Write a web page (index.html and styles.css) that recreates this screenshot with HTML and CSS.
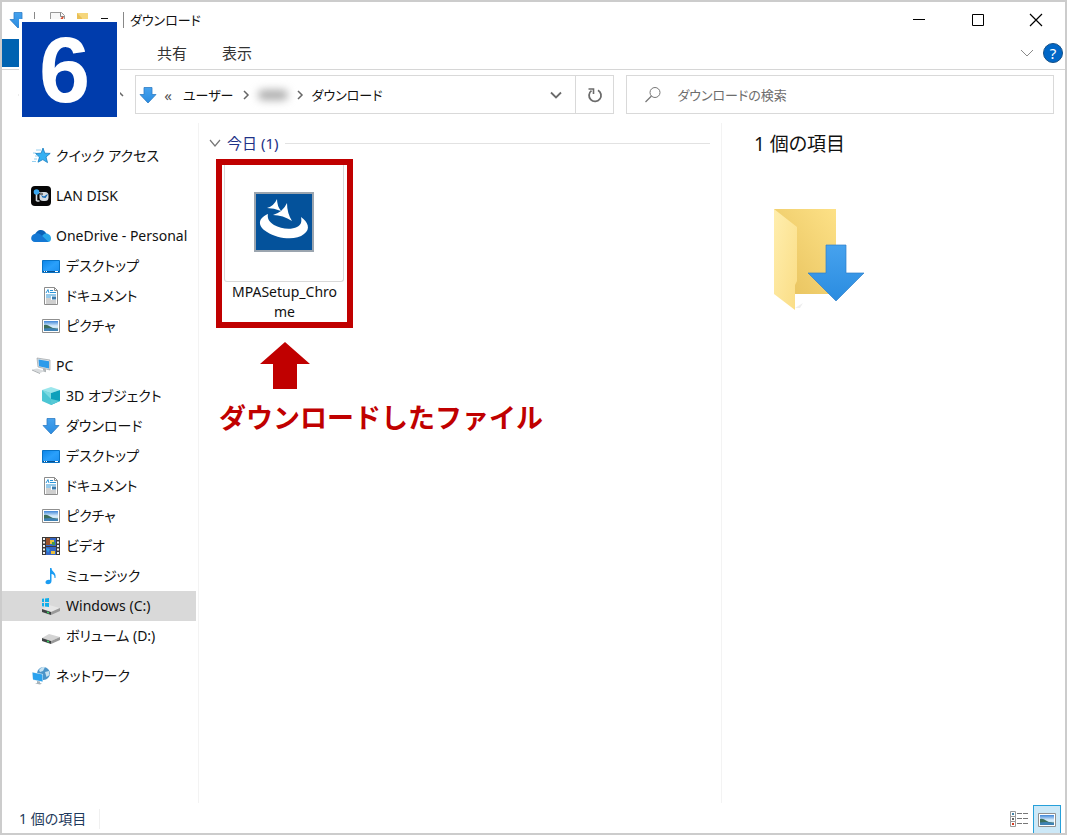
FILE: index.html
```html
<!DOCTYPE html>
<html lang="ja">
<head>
<meta charset="utf-8">
<title>ダウンロード</title>
<link rel="stylesheet" href="styles.css">
</head>
<body>
<svg class="defs" aria-hidden="true">
  <defs>
    <linearGradient id="g-blue" x1="0" y1="0" x2="1" y2="1"><stop offset="0" stop-color="#0a84e8"/><stop offset=".5" stop-color="#2aa0fb"/><stop offset="1" stop-color="#1a8ff0"/></linearGradient>
    <linearGradient id="g-arrow" x1="0" y1="0" x2="0" y2="1"><stop offset="0" stop-color="#46a2ee"/><stop offset="1" stop-color="#2a8ce0"/></linearGradient>
    <linearGradient id="g-back" x1="0" y1="1" x2="1" y2="0"><stop offset="0" stop-color="#e6c05a"/><stop offset="1" stop-color="#fde187"/></linearGradient>
    <linearGradient id="g-front" x1="0" y1="0" x2="1" y2="1"><stop offset="0" stop-color="#ffeeae"/><stop offset="1" stop-color="#fadd85"/></linearGradient>
    <linearGradient id="g-sky" x1="0" y1="0" x2="0" y2="1"><stop offset="0" stop-color="#3f86d8"/><stop offset=".5" stop-color="#d8ecfa"/><stop offset="1" stop-color="#b5d8ee"/></linearGradient>
    <symbol id="i-down" viewBox="0 0 18 18"><path d="M5 1.500h8v7h4L9 17 1 8.500h4z" fill="url(#g-arrow)" stroke="#2f7cc4" stroke-width=".8"/></symbol>
    <symbol id="i-desktop" viewBox="0 0 18 18"><path d="M.5 3.500h17v12H.5z" fill="url(#g-blue)" stroke="#0873c6"/><path d="M1 14.500h16" stroke="#08508f"/><path d="M2 14.500h1m1 0h1m8 0h3" stroke="#fff"/></symbol>
    <symbol id="i-doc" viewBox="0 0 18 18"><path d="M2.500.5h10l3 3v14h-13z" fill="#fff" stroke="#8c8c8c"/><path d="M12.500.5v3h3" fill="none" stroke="#8c8c8c"/><path d="M4 6l2-3.500 1 3.500M8 3.500h3M8 5.500h6M4 8h10M4 10h5" fill="none" stroke="#2d94d6"/><path d="M4 12h5M4 14h10M4 16h10" stroke="#a0a0a0"/><path d="M10 9.500h4v3h-4z" fill="#3c7cae"/></symbol>
    <symbol id="i-pic" viewBox="0 0 18 18"><path d="M.5 2.500h17v13H.5z" fill="#fff" stroke="#8f8f8f"/><path d="M2 4h14v10H2z" fill="url(#g-sky)"/><path d="M2 8q3-1 6 1.500t8 2V12H2z" fill="#3c6e5b"/><path d="M2 11.500l6-.5 8 1v2H2z" fill="#3f82b4"/></symbol>
    <symbol id="i-chev" viewBox="0 0 10 10"><path d="M3 1l4 4-4 4" fill="none" stroke="currentColor" stroke-width="1.500"/></symbol>
    <symbol id="i-disk" viewBox="0 0 18 18"><path d="M0 11l7-4 11 3-9 4z" fill="#d4d4d4"/><path d="M0 11l9 3v3l-9-3z" fill="#3f4244"/><path d="M9 14l9-4v3l-9 4z" fill="#999"/><path d="M5 13.500l2 .5v1.500L5 15z" fill="#39d060"/></symbol>
  </defs>
</svg>

<div class="window">
  <header class="titlebar">
    <div class="quick">
      <svg class="icon18"><use href="#i-down"/></svg>
      <span class="sep"></span>
      <svg class="icon18" viewBox="0 0 18 18"><path d="M2.500 1.500h11l3 3v12h-14z" fill="#f8f8f8" stroke="#999"/><path d="M12.500 1.500v4h4" fill="none" stroke="#888"/><path d="M8 10l2 3 5-7" fill="none" stroke="#dc5030" stroke-width="2"/></svg>
      <svg class="icon18" viewBox="0 0 18 18"><path d="M4 2h11v14H4z" fill="#f5d67c"/><path d="M4 2l5 5v10l-5-2z" fill="#e9bf55"/></svg>
      <svg class="icon18" viewBox="0 0 18 18"><path d="M3 7.500h7" stroke="#111"/><path d="M3 11h7l-3.500 4z" fill="#111"/></svg>
      <span class="sep"></span>
    </div>
    <h1 class="title">ダウンロード</h1>
    <div class="controls">
      <button type="button" aria-label="最小化"><svg viewBox="0 0 14 14"><path d="M1 6.500h12" stroke="#000"/></svg></button>
      <button type="button" aria-label="最大化"><svg viewBox="0 0 14 14"><path d="M1.500 1.500h11v11h-11z" fill="none" stroke="#000"/></svg></button>
      <button type="button" aria-label="閉じる"><svg viewBox="0 0 14 14"><path d="M1 1l12 12M13 1L1 13" stroke="#000" stroke-width="1.200"/></svg></button>
    </div>
  </header>

  <div class="ribbon">
    <button type="button" class="tab tab-file" aria-label="ファイル"></button>
    <button type="button" class="tab tab-home" aria-label="ホーム"></button>
    <button type="button" class="tab tab-share">共有</button>
    <button type="button" class="tab tab-view">表示</button>
    <button type="button" class="expand" aria-label="リボンの展開"><svg viewBox="0 0 14 14"><path d="M1 4l6 6 6-6" fill="none" stroke="#8a8a8a"/></svg></button>
    <button type="button" class="help" aria-label="ヘルプ">?</button>
  </div>

  <div class="toolbar">
    <div class="history">
      <button type="button" aria-label="戻る"><svg viewBox="0 0 14 14"><path d="M13 7H8M11 4L8 7l3 3" fill="none" stroke="#ddd" stroke-width="1.500"/></svg></button>
      <button type="button" aria-label="上へ"><svg viewBox="0 0 14 14"><path d="M7 13V2M1 8l6-6 6 6" fill="none" stroke="#666" stroke-width="1.500"/></svg></button>
    </div>
    <div class="address">
      <nav class="crumbs" aria-label="場所">
        <svg class="icon18"><use href="#i-down"/></svg>
        <span class="more">«</span>
        <a href="#users">ユーザー</a>
        <svg class="chev"><use href="#i-chev"/></svg>
        <a href="#user" aria-label="ユーザー名"><span class="smudge"></span></a>
        <svg class="chev"><use href="#i-chev"/></svg>
        <a href="#downloads">ダウンロード</a>
      </nav>
      <button type="button" class="drop" aria-label="以前の場所"><svg viewBox="0 0 14 14"><path d="M2 4.500l5 5 5-5" fill="none" stroke="#6b6b6b" stroke-width="1.800"/></svg></button>
      <button type="button" class="refresh" aria-label="最新の情報に更新"><svg viewBox="0 0 16 16"><path d="M11 3.200a6 6 0 1 1-6.500.4" fill="none" stroke="#6b6b6b" stroke-width="1.800"/><path d="M1.500 2h5v5" fill="none" stroke="#6b6b6b" stroke-width="1.600"/></svg></button>
    </div>
    <label class="search">
      <svg viewBox="0 0 18 18"><circle cx="11" cy="6.500" r="5" fill="none" stroke="#777"/><path d="M7.500 10L1.500 16" stroke="#777" stroke-width="1.200"/></svg>
      <input type="search" placeholder="ダウンロードの検索" aria-label="ダウンロードの検索">
    </label>
  </div>

  <main class="body">
    <nav class="tree" aria-label="ナビゲーション">
      <ul>
        <li><a href="#quick"><svg viewBox="0 0 20 20"><path d="M12 2l1.800 5.200 5.400.2-4.200 3.600 1.500 5.600-4.700-3-4.800 2.600L8.500 11 4.500 7.500l5.600-.3z" fill="#35b0f2" stroke="#147cc0" stroke-width=".8"/><path d="M5 4h5M2 7h3M4 10h3M3 13h3M1 15.500h4" stroke="#7cc4ec" stroke-width=".8"/></svg>クイック アクセス</a></li>
      </ul>
      <ul>
        <li><a href="#lan"><svg viewBox="0 0 20 20"><rect width="20" height="20" rx="4" fill="#060606"/><path d="M5.500 6v9" stroke="#d5dbe0" stroke-width="1.600"/><path d="M5.500 6l7 1.500" stroke="#d5dbe0"/><circle cx="5.500" cy="6" r="2.800" fill="#39a7f0"/><path d="M5.500 15h3" stroke="#d5dbe0" stroke-width="1.500"/><rect x="8.500" y="6" width="9" height="9" rx="3.500" fill="#d5dbe0"/><path d="M10 9l3 1.500 3.500-2.500v1l-2 3-3-.5z" fill="#1168b4"/><path d="M9 8h3" stroke="#111"/></svg>LAN DISK</a></li>
      </ul>
      <ul>
        <li><a href="#onedrive"><svg viewBox="0 0 20 20"><path d="M4 9.500C5 3 13 2 15.500 8L10 12z" fill="#0962b8"/><path d="M13 8c4-1.500 7 1.500 7 4.500 0 2-1 3.500-3 3.500H6l5-6z" fill="#28a8ea"/><path d="M5 7.500c3-1 5 1 12.500 8.500H4C-1 16-1.500 8.500 5 7.500z" fill="#1478d4"/></svg>OneDrive - Personal</a></li>
        <li><a class="child" href="#od-desktop"><svg><use href="#i-desktop"/></svg>デスクトップ</a></li>
        <li><a class="child" href="#od-docs"><svg><use href="#i-doc"/></svg>ドキュメント</a></li>
        <li><a class="child" href="#od-pics"><svg><use href="#i-pic"/></svg>ピクチャ</a></li>
      </ul>
      <ul>
        <li><a href="#pc"><svg viewBox="0 0 20 20"><path d="M6 2l13 2v10L7 11z" fill="#e0e3e5" stroke="#8d9499" stroke-width=".6"/><path d="M7.500 3.500l10.500 1.700v7.300L8 10.200z" fill="#2d9bea"/><path d="M12 12.500v3l3 .8v-3z" fill="#aeb3b6"/><path d="M1 13.500l5-1 8 2.500-5 2z" fill="#d9dcde"/><path d="M1 13.500l8 3.500v1l-8-3.500z" fill="#a9adb0"/></svg>PC</a></li>
        <li><a class="child" href="#objects"><svg viewBox="0 0 18 18"><path d="M0 3l9-3 9 3-9 3z" fill="#9be6ec"/><path d="M0 3l9 3v12l-9-4z" fill="#4cc6d4"/><path d="M9 6l9-3v11l-9 4z" fill="#0fa0bb"/><path d="M0 3l9 3v6z" fill="#7cdae2"/><path d="M9 12l9 2-9 4z" fill="#56c9d6"/></svg>3D オブジェクト</a></li>
        <li><a class="child" href="#dl"><svg><use href="#i-down"/></svg>ダウンロード</a></li>
        <li><a class="child" href="#desktop"><svg><use href="#i-desktop"/></svg>デスクトップ</a></li>
        <li><a class="child" href="#docs"><svg><use href="#i-doc"/></svg>ドキュメント</a></li>
        <li><a class="child" href="#pics"><svg><use href="#i-pic"/></svg>ピクチャ</a></li>
        <li><a class="child" href="#video"><svg viewBox="0 0 18 18"><path d="M0 0h18v18H0z" fill="#3a3a3a"/><path d="M2 1v17M16 1v17" stroke="#f2f2f2" stroke-width="2" stroke-dasharray="2 1.500"/><path d="M4 1h10v8H4zM4 10h10v8H4z" fill="#3565c4"/><path d="M4 1h4v7H4z" fill="#9a532d"/><path d="M8 3h4v4H8z" fill="#e7c23b"/><path d="M10 5h3v3h-3z" fill="#3c9a48"/><path d="M4 11l4 1-2 4z" fill="#2c9ee5"/><path d="M9 14h4v3H9z" fill="#eac03c"/></svg>ビデオ</a></li>
        <li><a class="child" href="#music"><svg viewBox="0 0 18 18"><path d="M8 1h1.500c0 4 5 4 4 10h-1c0-3-1-4-3-4v7c0 4-6 4-6 1.500 0-2 2-3 4.500-2.500z" fill="#1b9cf2"/></svg>ミュージック</a></li>
        <li><a class="child selected" href="#c" aria-current="true"><svg viewBox="0 0 18 18"><path d="M0 12l7-4 11 3-9 4z" fill="#e6e6e6"/><path d="M0 12l9 3v3l-9-3z" fill="#3f4244"/><path d="M9 15l9-4v3l-9 4z" fill="#999"/><path d="M5 14.500l2 .5v1.500L5 16z" fill="#39d060"/><path d="M-1 2l3-.5v3.500h-3zM3 1.400L7 1v4H3zM-1 6h3v3.500l-3-.5zM3 6h4v4l-4-.5z" fill="#10aeea"/></svg>Windows (C:)</a></li>
        <li><a class="child" href="#d"><svg><use href="#i-disk"/></svg>ボリューム (D:)</a></li>
      </ul>
      <ul>
        <li><a href="#network"><svg viewBox="0 0 20 20"><circle cx="12.500" cy="7.500" r="6.500" fill="#4b94c9"/><path d="M8 4q3-4 6-3l-2 4-3 1zM14 6l4-1 .5 4-3 2z" fill="#c7e2f1"/><path d="M1 6l11 2v8L2 14z" fill="#ddebf3"/><path d="M1.500 6.500l10 2v7l-9.500-2z" fill="#2aa2ee"/><path d="M6 15v2l-2 .5 5 1 2-1-2-.5v-1.500z" fill="#a7b4bc"/></svg>ネットワーク</a></li>
      </ul>
    </nav>

    <section class="files">
      <h2 class="group"><svg viewBox="0 0 14 14"><path d="M2 4l5 6 5-6" fill="none" stroke="#777" stroke-width="1.200"/></svg><span>今日 (1)</span></h2>
      <a class="file" href="#setup">
        <span class="thumb">
          <svg viewBox="0 0 60 60"><path d="M1 1h58v58H1z" fill="#04529b" stroke="#9ba5af" stroke-width="2"/><path d="M23 7q0 7 4 12-7-3-14-3 7-2 10-9zM33 11q0 10 5 18-9-6-19-6 10-3 14-12z" fill="#fff"/><path d="M14 22C4 26 3 34 13 40c11 7 29 9 37 2 7-5 4-12-3-17 1 5 0 8-4 10-6 3-16 2-23-2-5-3-7-7-6-11z" fill="#fff"/></svg>
        </span>
        <span class="name">MPASetup_Chrome</span>
      </a>
      <div class="note">
        <svg viewBox="0 0 50 47"><path d="M25 0l25 22H37v25H13V22H0z" fill="#c00000"/></svg>
        <p>ダウンロードしたファイル</p>
      </div>
    </section>

    <aside class="details">
      <h2>1 個の項目</h2>
      <svg viewBox="0 0 92 104"><path d="M0 1h62v85H0z" fill="url(#g-back)"/><path d="M21 100l8-5-3 5z" fill="#eee"/><path d="M0 1l23 18v54l-2 4v25L0 86z" fill="url(#g-front)"/><path d="M52 37h20v28h18L62 93 34 65h18z" fill="url(#g-arrow)" stroke="#2f7fc8" stroke-width=".7"/></svg>
    </aside>
  </main>

  <footer class="status">
    <span class="count">1 個の項目</span>
    <div class="views">
      <button type="button" aria-label="詳細"><svg viewBox="0 0 18 18"><path d="M.5 1.500h5v5h-5zM.5 6.500h5v5h-5zM.5 11.500h5v5h-5z" fill="#fff" stroke="#999"/><path d="M2 3h2v2H2z" fill="#4684a7"/><path d="M2 8h2v2H2z" fill="#666"/><path d="M2 13h2v2H2z" fill="#d63b20"/><path d="M7 3.500h5m1 0h5M7 8.500h5m1 0h5M7 13.500h5m1 0h5" stroke="#777"/></svg></button>
      <button type="button" class="on" aria-label="大アイコン" aria-pressed="true"><svg><use href="#i-pic"/></svg></button>
    </div>
  </footer>

  <div class="step">6</div>
</div>
</body>
</html>
```
FILE: styles.css
```css
* { box-sizing: border-box; }
body {
  margin: 0;
  color: #111;
  background: #fff;
  font-family: "Noto Sans", "Noto Sans CJK JP", sans-serif;
  font-size: 14px;
  line-height: 20px;
  font-feature-settings: "palt";
}
h1, h2, p, ul { margin: 0; padding: 0; font-weight: 400; }
ul { list-style: none; }
a { color: inherit; text-decoration: none; }
button {
  padding: 0;
  border: 0;
  background: none;
  color: inherit;
  font: inherit;
  font-feature-settings: inherit;
}
svg { display: block; flex: none; }
.defs { position: absolute; width: 0; height: 0; }
.icon18 { width: 18px; height: 18px; }

.window {
  position: relative;
  display: flex;
  flex-direction: column;
  min-height: 100vh;
  border: 2px solid #ccc;
}

.titlebar { display: flex; align-items: center; height: 35px; }
.quick { display: flex; align-items: center; gap: 7px; padding-left: 7px; }
.sep { width: 1px; height: 16px; margin-right: 6px; background: #888; }
.title { font-size: 13px; }
.controls { display: flex; margin-left: auto; }
.controls button { display: grid; place-items: center; width: 58px; height: 34px; }
.controls button:first-child { width: 60px; }
.controls svg { width: 14px; height: 14px; }

.ribbon {
  display: flex;
  align-items: center;
  height: 33px;
  padding-top: 1px;
  padding-right: 2px;
  padding-bottom: 2px;
  border-bottom: 1px solid #d6d6d6;
  color: #333;
  font-size: 15px;
}
.tab { height: 28px; }
.tab-file { width: 78px; background: #0063b1; }
.tab-home { width: 48px; }
.tab-share { width: 88px; }
.tab-view { width: 42px; }
.expand { margin-left: auto; }
.expand svg { width: 14px; height: 14px; }
.help {
  width: 20px;
  height: 20px;
  margin-left: 9px;
  border: 1px solid #145087;
  border-radius: 50%;
  background: #0067c7;
  color: #fff;
  line-height: 18px;
}

.toolbar { display: flex; align-items: center; padding: 5px 11px 9px 9px; }
.history { display: flex; flex: none; justify-content: space-between; width: 124px; padding-right: 11px; }
.history button { width: 14px; height: 14px; }
.address { display: flex; flex: 1; height: 39px; border: 1px solid #d9d9d9; }
.crumbs { display: flex; flex: 1; align-items: center; padding-left: 3px; font-size: 13px; }
.more { width: 22px; text-align: center; color: #555; font-size: 15px; }
.crumbs a { padding: 0 4px; }
.chev { width: 10px; height: 10px; margin: 0 3px; color: #666; }
.smudge {
  display: block;
  width: 30px;
  height: 10px;
  border-radius: 5px;
  background: #aaa;
  filter: blur(4px);
}
.drop, .refresh { display: grid; place-items: center; width: 38px; }
.drop svg { width: 14px; height: 14px; }
.refresh { border-left: 1px solid #d9d9d9; }
.refresh svg { width: 16px; height: 16px; }
.search {
  display: flex;
  flex: none;
  align-items: center;
  gap: 15px;
  width: 41%;
  height: 39px;
  margin-left: 12px;
  padding-left: 17px;
  border: 1px solid #d9d9d9;
}
.search svg { width: 18px; height: 18px; }
.search input {
  flex: 1;
  min-width: 0;
  padding: 0;
  border: 0;
  outline: 0;
  background: none;
  font: inherit;
  font-size: 13px;
  font-feature-settings: inherit;
}
.search input::placeholder { color: #6d6d6d; opacity: 1; }

.body { display: flex; flex: 1; }
.tree {
  display: flex;
  flex: none;
  flex-direction: column;
  gap: 10px;
  width: 197px;
  padding: 18px 2px 0 0;
  border-right: 1px solid #f3f3f3;
}
.tree a {
  display: flex;
  align-items: center;
  gap: 5px;
  height: 30px;
  padding-left: 29px;
  white-space: nowrap;
}
.tree svg { width: 20px; height: 20px; }
.tree .child { gap: 6px; padding-left: 40px; }
.tree .child svg { width: 18px; height: 18px; }
.tree .selected { background: #d9d9d9; }

.files { flex: 1; padding: 10px 11px 0 9px; }
.group { display: flex; align-items: center; gap: 5px; color: #1e3287; font-size: 15px; }
.group svg { width: 14px; height: 14px; }
.group::after { content: ""; flex: 1; height: 1px; margin-left: 2px; background: #e2e2e2; }
.file {
  display: block;
  width: 137px;
  margin: 6px 0 0 8px;
  padding: 0 3px;
  border: 6px solid #c00000;
  text-align: center;
}
.thumb {
  display: grid;
  place-items: center;
  height: 117px;
  margin: 0 0 0 -1px;
  padding-bottom: 2px;
  border: 1px solid #d9d9d9;
  border-top: 0;
  border-radius: 0 0 3px 3px;
}
.thumb svg { width: 60px; height: 60px; }
.name { display: block; padding: 0 4px; overflow-wrap: anywhere; }
.note { margin: 14px 0 0 11px; color: #c00000; }
.note svg { width: 50px; height: 47px; margin-left: 41px; }
.note p {
  margin-top: 8px;
  font-family: "Noto Sans CJK JP", sans-serif;
  font-size: 27px;
  font-weight: 700;
  line-height: 40px;
  font-feature-settings: normal;
}

.details { flex: none; width: 344px; padding: 9px 32px; border-left: 1px solid #f3f3f3; }
.details h2 { font-size: 19px; line-height: 24px; }
.details svg { width: 92px; height: 104px; margin: 52px 0 0 20px; }

.status { display: flex; align-items: center; height: 28px; padding: 0 4px 0 17px; margin-top: 2px; color: #1e395b; }
.count { padding-right: 13px; border-right: 1px solid #f0f0f0; }
.views { display: flex; margin-left: auto; }
.views button { display: grid; place-items: center; width: 28px; height: 28px; }
.views .on { border: 1px solid #26a0da; border-bottom: 0; background: #cce8f7; }
.views svg { width: 18px; height: 18px; }

.step {
  position: absolute;
  top: 17px;
  left: 17px;
  display: grid;
  place-items: center;
  width: 101px;
  height: 101px;
  padding: 2px 10px 0 0;
  border: 3px solid #fff;
  background: #003cac;
  color: #fff;
  font-family: "Liberation Sans", Arial, sans-serif;
  font-size: 92px;
  font-weight: 700;
  line-height: 93px;
}
```
